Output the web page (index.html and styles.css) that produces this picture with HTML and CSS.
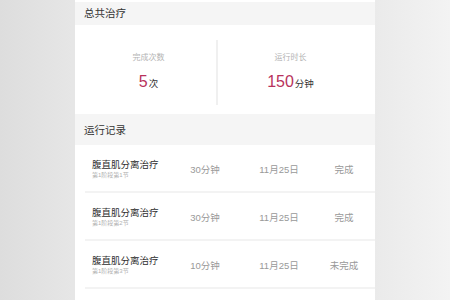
FILE: index.html
```html
<!DOCTYPE html>
<html lang="zh-CN">
<head>
    <meta charset="UTF-8">
    <meta name="viewport" content="width=device-width, initial-scale=1.0">
    <title>治疗记录</title>
    <link rel="stylesheet" href="styles.css">
</head>
<body>
    <div class="panel">
        <div class="section-title first">总共治疗</div>

        <div class="stats">
            <div class="stat left">
                <div class="stat-label">完成次数</div>
                <div class="stat-value"><span class="num">5</span><span class="unit">次</span></div>
            </div>
            <div class="divider"></div>
            <div class="stat right">
                <div class="stat-label">运行时长</div>
                <div class="stat-value"><span class="num">150</span><span class="unit">分钟</span></div>
            </div>
        </div>

        <div class="section-title">运行记录</div>

        <div class="records">
            <div class="record">
                <div class="name">
                    <div class="title">腹直肌分离治疗</div>
                    <div class="sub">第1阶段第1节</div>
                </div>
                <div class="cell">30分钟</div>
                <div class="cell">11月25日</div>
                <div class="cell">完成</div>
            </div>
            <div class="record">
                <div class="name">
                    <div class="title">腹直肌分离治疗</div>
                    <div class="sub">第1阶段第2节</div>
                </div>
                <div class="cell">30分钟</div>
                <div class="cell">11月25日</div>
                <div class="cell">完成</div>
            </div>
            <div class="record">
                <div class="name">
                    <div class="title">腹直肌分离治疗</div>
                    <div class="sub">第1阶段第3节</div>
                </div>
                <div class="cell">10分钟</div>
                <div class="cell">11月25日</div>
                <div class="cell">未完成</div>
            </div>
        </div>
    </div>
</body>
</html>
```

FILE: styles.css
```css
html, body {
    margin: 0;
    height: 100%;
    overflow: hidden;
}

body {
    font-family: 'Liberation Sans', 'Noto Sans CJK SC', sans-serif;
    background: linear-gradient(to right, #dddddd 0%, #e6e6e6 16%, #e9e9e9 50%, #eaeaea 83%, #f3f3f3 100%);
}

.panel {
    width: 300px;
    min-height: 100%;
    box-sizing: border-box;
    margin: 0 auto;
    background-color: #fff;
    padding-top: 2px;
}

.section-title {
    height: 31px;
    line-height: 32px;
    padding-left: 9px;
    font-size: 10.5px;
    color: #333;
    background-color: #f5f5f5;
}

.section-title.first {
    height: 23px;
    line-height: 22px;
}

/* stats block */
.stats {
    display: flex;
    height: 89px;
    padding-right: 12px;
}

.stat {
    text-align: center;
    padding-top: 27px;
}

.stat.left {
    width: 135px;
    padding-left: 6px;
}

.stat.right {
    flex: 1;
}

.divider {
    width: 2px;
    margin: 15px 0 9px;
    background-color: #f0f0f0;
}

.stat-label {
    font-size: 8px;
    line-height: 11px;
    color: #b3b3b3;
}

.stat-value {
    margin-top: 7px;
    line-height: 24px;
}

.stat-value .num {
    font-size: 16px;
    color: #b8325c;
}

.stat-value .unit {
    font-size: 9.5px;
    color: #333;
    margin-left: 1px;
}

/* records */
.record {
    display: grid;
    grid-template-columns: 83px 60px 88px 42px;
    align-items: center;
    height: 44px;
    padding-top: 2px;
    margin-left: 10px;
    padding-left: 7px;
    border-bottom: 2px solid #f3f3f3;
}

.record .title {
    font-size: 9.5px;
    line-height: 12px;
    color: #2e2e2e;
    white-space: nowrap;
}

.record .sub {
    font-size: 6px;
    line-height: 8px;
    color: #b0b0b0;
}

.record .cell {
    text-align: center;
    font-size: 9.5px;
    color: #999;
}
```
